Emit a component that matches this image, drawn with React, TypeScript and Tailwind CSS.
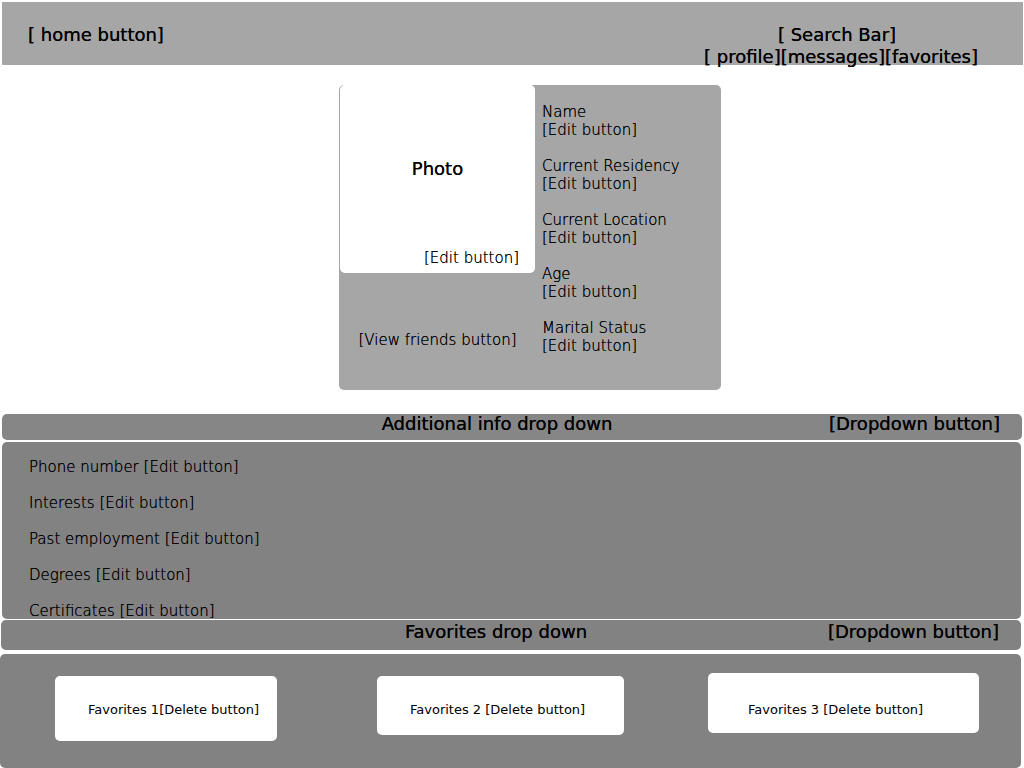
const profileFields = ['Name', 'Current Residency', 'Current Location', 'Age', 'Marital Status'];
const additionalFields = ['Phone number', 'Interests', 'Past employment', 'Degrees', 'Certificates'];
const favorites = [
  { label: 'Favorites 1', gap: '', className: 'col-start-2 mt-[22px] h-[65px] pl-[33px] pt-[25px]' },
  { label: 'Favorites 2', gap: ' ', className: 'col-start-4 mt-[22px] h-[59px] pl-[33px] pt-[25px]' },
  { label: 'Favorites 3', gap: ' ', className: 'col-start-6 mt-[19px] h-[60px] pl-10 pt-7' },
];

function DropdownBar({ title, className }: { title: string; className: string }) {
  return (
    <div className={`grid grid-cols-[1fr_auto_1fr] items-start rounded-[5px] pr-[22px] text-[18px] font-normal leading-5 ${className}`}>
      <h2 className="col-start-2 pr-2">{title}</h2>
      <button type="button" className="justify-self-end whitespace-nowrap [text-shadow:inherit]">[Dropdown button]</button>
    </div>
  );
}

export default function App() {
  return (
    <div className="min-h-screen bg-white pt-[2px] font-['DejaVu_Sans','Verdana',sans-serif] text-[15px] font-extralight leading-[18px] text-black [text-shadow:0_0_0_#000]">
      <header className="ml-[2px] mr-px flex items-start justify-between bg-[#a6a6a6] pl-[26px] pr-[45px] pt-[22px] text-[18px] font-normal leading-[22px]">
        <a href="#home">[ home button]</a>
        <div className="-mb-[3px] flex flex-col items-center">
          <input
            type="search"
            aria-label="Search"
            placeholder="[ Search Bar]"
            className="h-[22px] w-40 bg-transparent pl-2 text-center leading-[22px] outline-none [text-shadow:inherit] placeholder:text-black placeholder:opacity-100"
          />
          <nav className="flex">
            <a href="#profile">[ profile]</a>
            <a href="#messages">[messages]</a>
            <a href="#favorites">[favorites]</a>
          </nav>
        </div>
      </header>

      <main>
        <div className="flex justify-center pb-6 pl-9 pt-5">
          <section className="flex w-[382px] rounded-[5px] bg-[#a6a6a6] pl-px">
            <div className="flex w-[195px] flex-col items-center">
              <div className="flex h-[188px] w-full flex-col rounded-[5px] bg-white pb-[6px] pr-4">
                <h1 className="my-auto pb-px pl-4 pt-1 text-center text-[18px] font-normal leading-5">Photo</h1>
                <button type="button" className="self-end [text-shadow:inherit]">[Edit button]</button>
              </div>
              <button type="button" className="mt-[58px] [text-shadow:inherit]">[View friends button]</button>
            </div>
            <ul className="flex flex-col gap-[18px] pb-[35px] pl-[7px] pt-[18px]">
              {profileFields.map((field) => (
                <li key={field} className="flex flex-col items-start">
                  <span>{field}</span>
                  <button type="button" className="[text-shadow:inherit]">[Edit button]</button>
                </li>
              ))}
            </ul>
          </section>
        </div>

        <DropdownBar title="Additional info drop down" className="ml-[2px] mr-[2px] h-[26px] bg-[#868686]" />
        <ul className="ml-[2px] mr-[3px] mt-[2px] flex h-[177px] flex-col gap-[18px] rounded-[5px] bg-[#828282] pl-[27px] pt-4">
          {additionalFields.map((field) => (
            <li key={field}>
              {field} <button type="button" className="[text-shadow:inherit]">[Edit button]</button>
            </li>
          ))}
        </ul>

        <DropdownBar title="Favorites drop down" className="ml-px mr-[3px] mt-px h-[30px] bg-[#828282] pt-[2px]" />
        <section className="mr-[3px] mt-1 grid h-[114px] grid-cols-[55fr_222fr_100fr_247fr_84fr_271fr_42fr] items-start rounded-[5px] bg-[#828282] text-[13px] font-normal [text-shadow:none]">
          {favorites.map(({ label, gap, className }) => (
            <article key={label} className={`row-start-1 whitespace-pre rounded-[5px] bg-white ${className}`}>
              {label}{gap}<button type="button">[Delete button]</button>
            </article>
          ))}
        </section>
      </main>
    </div>
  );
}
